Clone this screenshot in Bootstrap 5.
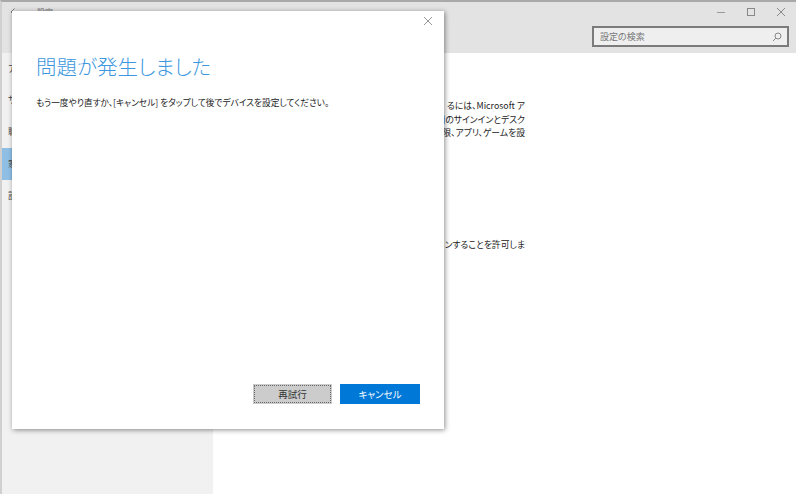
<!DOCTYPE html>
<html lang="ja">
<head>
<meta charset="UTF-8">
<title>設定</title>
<link href="https://cdn.jsdelivr.net/npm/bootstrap@5.3.3/dist/css/bootstrap.min.css" rel="stylesheet">
<style>
  html, body { height: 100%; }
  body {
    font-family: "Noto Sans CJK JP", "Liberation Sans", sans-serif;
    font-feature-settings: "palt";
    background: #fff;
    color: #222;
    overflow: hidden;
    font-size: 9px;
  }
  .app-window {
    width: 796px;
    height: 494px;
    border-top: 2px solid #a9a9a9;
    border-left: 2px solid #d0d0d0;
    position: relative;
  }
  .title-area { background: #e3e3e3; height: 51px; }
  .title-row { height: 19px; padding-left: 8px; color: #777; }
  .title-row span { font-size: 8px; margin-left: 17px; }
  .win-btns { gap: 20px; padding-right: 10px; }
  .win-btns svg { display: block; }
  .search-box {
    width: 197px;
    height: 21px;
    margin: 5px 7px 0 0;
    background: #efefef;
    border: 2px solid #7b7b7b;
    color: #777;
    padding: 0 5px 0 6px;
    font-size: 9px;
  }
  .side-pane {
    width: 211px;
    background: #f1f1f1;
    flex: none;
    color: #444;
  }
  .side-row { height: 32px; padding-left: 6px; font-size: 9px; line-height: 32px; white-space: nowrap; }
  .side-row:first-child { height: 31px; line-height: 31px; }
  .side-row.active { background: #90bfe6; }
  .main-pane { width: 312px; padding-top: 46px; flex: none; }
  .desc-line {
    white-space: nowrap;
    display: flex;
    justify-content: flex-end;
    height: 13.500px;
    line-height: 13.500px;
    font-size: 8.800px;
    color: #222;
  }
  .desc-gap { height: 98px; }
  .setup-dialog {
    position: absolute;
    left: 10px;
    top: 9px;
    width: 432px;
    height: 418px;
    background: #fff;
    box-shadow: 1px 1px 5px rgba(0,0,0,.45);
    padding: 0 24px;
  }
  .dialog-close { position: absolute; right: 11px; top: 5px; display: block; }
  .dialog-title {
    font-size: 20.500px;
    font-weight: 300;
    color: #3b97de;
    margin: 41px 0 0 0;
    line-height: 28px;
  }
  .dialog-text { font-size: 8.700px; line-height: 12px; margin: 17px 0 0 0; color: #222; white-space: nowrap; }
  .dialog-btns {
    position: absolute;
    right: 24px;
    bottom: 25px;
    gap: 8px;
  }
  .dlg-btn {
    width: 80px;
    height: 20px;
    padding: 0;
    border-radius: 0;
    font-size: 9.500px;
    font-feature-settings: "palt";
    line-height: 16px;
    border: 2px solid transparent;
  }
  .dlg-btn-retry { width: 79px; background: #ccc; border-color: #ccc; color: #333; outline: 1px dotted #666; outline-offset: -2px; }
  .dlg-btn-cancel { background: #0078d7; border-color: #0078d7; color: #fff; }
</style>
</head>
<body>
<div class="app-window d-flex flex-column">
  <div class="title-area flex-shrink-0">
    <div class="title-row d-flex justify-content-between align-items-center">
      <div class="d-flex align-items-center">
        <svg width="10" height="10" viewBox="0 0 10 10"><path d="M9 5H1M4.500 1.500 1 5l3.500 3.500" fill="none" stroke="#777"/></svg>
        <span>設定</span>
      </div>
      <div class="win-btns d-flex align-items-center">
        <svg width="10" height="10" viewBox="0 0 10 10"><path d="M1 5.500h8" stroke="#999"/></svg>
        <svg width="10" height="10" viewBox="0 0 10 10"><rect x="1.500" y="1.500" width="7" height="7" fill="none" stroke="#888"/></svg>
        <svg width="10" height="10" viewBox="0 0 10 10"><path d="M1 1l8 8M9 1l-8 8" stroke="#888" fill="none"/></svg>
      </div>
    </div>
    <div class="d-flex justify-content-end">
      <div class="search-box d-flex justify-content-between align-items-center">
        <span>設定の検索</span>
        <svg width="10" height="10" viewBox="0 0 10 10"><circle cx="6" cy="4" r="3" fill="none" stroke="#888"/><path d="M3.800 6.200 1 9" stroke="#888"/></svg>
      </div>
    </div>
  </div>
  <div class="d-flex flex-grow-1">
    <div class="side-pane">
      <div class="side-row">ア</div>
      <div class="side-row">サ</div>
      <div class="side-row">職</div>
      <div class="side-row active">家</div>
      <div class="side-row">設</div>
    </div>
    <div class="main-pane">
      <div class="desc-line">るには、Microsoft ア</div>
      <div class="desc-line">用のサインインとデスク</div>
      <div class="desc-line">限、アプリ、ゲームを設</div>
      <div class="desc-gap"></div>
      <div class="desc-line">ンすることを許可しま</div>
    </div>
  </div>

  <div class="setup-dialog">
    <svg class="dialog-close" width="10" height="10" viewBox="0 0 10 10"><path d="M1 1l8 8M9 1l-8 8" stroke="#999" fill="none"/></svg>
    <h1 class="dialog-title">問題が発生しました</h1>
    <p class="dialog-text">もう一度やり直すか、[キャンセル] をタップして後でデバイスを設定してください。</p>
    <div class="dialog-btns d-flex">
      <button type="button" class="btn dlg-btn dlg-btn-retry">再試行</button>
      <button type="button" class="btn dlg-btn dlg-btn-cancel">キャンセル</button>
    </div>
  </div>
</div>
<script src="https://cdn.jsdelivr.net/npm/bootstrap@5.3.3/dist/js/bootstrap.bundle.min.js"></script>
</body>
</html>
